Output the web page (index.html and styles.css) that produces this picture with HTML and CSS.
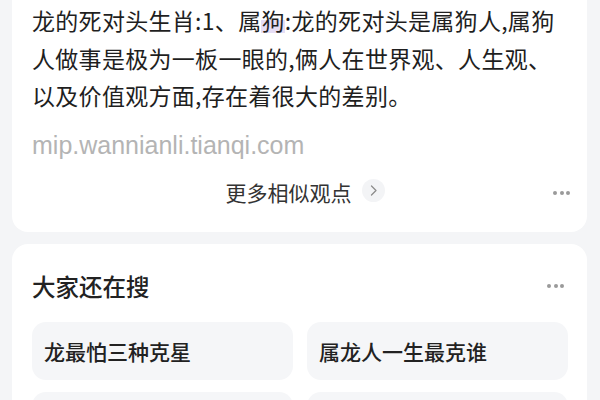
FILE: index.html
```html
<!DOCTYPE html>
<html>
<head>
	<meta charset="utf-8">
	<title>龙的死对头生肖</title>
	<link rel="stylesheet" href="styles.css">
</head>
<body>
	<div class="card answer-card">
		<p class="answer-text">龙的死对头生肖:1、属<span class="mark">狗</span>:龙的死对头是属狗人,属狗<br>人做事是极为一板一眼的,俩人在世界观、人生观、<br>以及价值观方面,存在着很大的差别。</p>
		<div class="source">mip.wannianli.tianqi.com</div>
		<div class="answer-footer">
			<span></span>
			<a class="more-link">更多相似观点
				<span class="more-arrow">
					<svg width="23" height="23" viewBox="0 0 23 23"><path d="M9.5 7 L14 11.5 L9.5 16" fill="none" stroke="#8c8c8c" stroke-width="1.3" stroke-linecap="round" stroke-linejoin="round"/></svg>
				</span>
			</a>
			<span class="dots dots-footer"><i></i><i></i><i></i></span>
		</div>
	</div>

	<div class="card related-card">
		<div class="related-header">
			<h2 class="related-title">大家还在搜</h2>
			<span class="dots"><i></i><i></i><i></i></span>
		</div>
		<div class="chip-grid">
			<a class="chip">龙最怕三种克星</a>
			<a class="chip">属龙人一生最克谁</a>
			<a class="chip"></a>
			<a class="chip"></a>
		</div>
	</div>
</body>
</html>
```

FILE: styles.css
```css
body {
	margin: 0;
	background-color: #f4f5f7;
	font-family: "Noto Sans CJK SC", "Noto Sans", sans-serif;
	color: #222;
	overflow: hidden;
}
.card {
	background-color: #fff;
	border-radius: 16px;
	margin: 0 13px 12px 12px;
}
.answer-card {
	margin-top: -20px;
	padding: 22px 20px 20px;
}
.answer-text {
	margin: 0;
	font-size: 23px;
	line-height: 37.5px;
	letter-spacing: 0.3px;
	color: #1f1f1f;
}
.mark {
	background: linear-gradient(to bottom, transparent 50%, #e6ddf5 50%, #e6ddf5 88%, transparent 88%);
}
.source {
	margin-top: 15px;
	font-family: "Liberation Sans", Arial, sans-serif;
	font-size: 25px;
	line-height: 30px;
	color: #b4b4b4;
}
.answer-footer {
	margin-top: 12px;
	display: grid;
	grid-template-columns: 1fr auto 1fr;
	align-items: center;
	height: 40px;
}
.more-link {
	display: flex;
	align-items: center;
	gap: 10px;
	margin-left: 11px;
	font-size: 21px;
	color: #333;
}
.more-arrow {
	width: 23px;
	height: 23px;
	border-radius: 50%;
	background-color: #f3f4f6;
	display: flex;
	margin-top: -3px;
}
.dots {
	display: flex;
	gap: 2.4px;
	justify-self: end;
}
.dots i {
	width: 4px;
	height: 4px;
	border-radius: 50%;
	background-color: #9a9a9a;
}
.dots-footer {
	margin-right: -3px;
	margin-top: 2px;
}
.related-card {
	padding: 26px 19px 20px 20px;
}
.related-header {
	display: flex;
	justify-content: space-between;
	align-items: center;
	padding-right: 4px;
}
.related-title {
	margin: 0;
	font-size: 23.5px;
	line-height: 32px;
	font-weight: 500;
	color: #222;
}
.chip-grid {
	margin-top: 20px;
	display: grid;
	grid-template-columns: 1fr 1fr;
	gap: 12px 14px;
}
.chip {
	height: 58px;
	display: flex;
	align-items: center;
	padding: 0 12px;
	border-radius: 14px;
	background-color: #f5f6f8;
	font-size: 21px;
	font-weight: 500;
	color: #222;
}
```
